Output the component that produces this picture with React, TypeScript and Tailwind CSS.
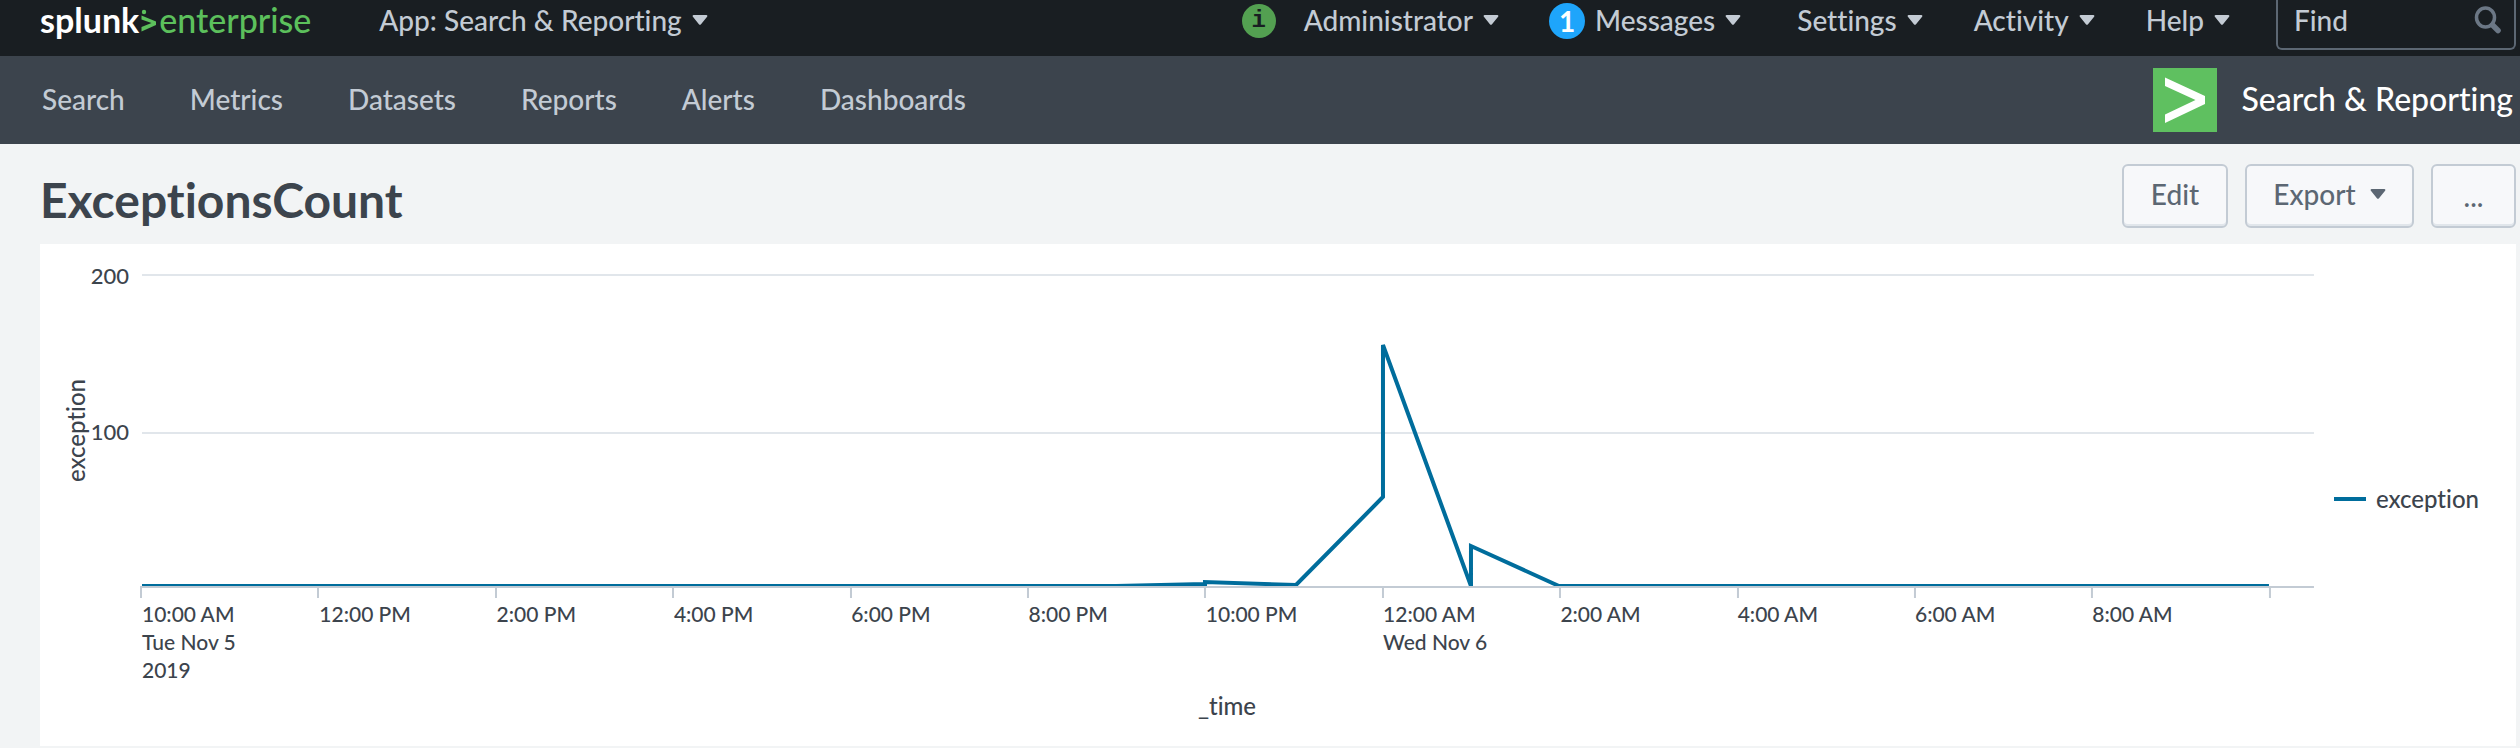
const navItems = ["Search", "Metrics", "Datasets", "Reports", "Alerts", "Dashboards"];

const timeLabels: string[][] = [
  ["10:00 AM", "Tue Nov 5", "2019"],
  ["12:00 PM"],
  ["2:00 PM"],
  ["4:00 PM"],
  ["6:00 PM"],
  ["8:00 PM"],
  ["10:00 PM"],
  ["12:00 AM", "Wed Nov 6"],
  ["2:00 AM"],
  ["4:00 AM"],
  ["6:00 AM"],
  ["8:00 AM"],
];

// Plot space: 2174 wide, two hours every 177.4 units, baseline at y = 312.
const tickStep = 177.4;
const series =
  "2,312 976,312 1065,310 1065,308 1156,311 1243,223 1243,71 1331,312 1331,272 1419,312 2129,312";

function Caret({ className = "" }: { className?: string }) {
  return (
    <svg width="16" height="10" viewBox="0 0 16 10" fill="currentColor" className={className} aria-hidden="true">
      <path d="M1.6 0h12.8c.9 0 1.3 1 .7 1.7L9 9.200c-.6.7-1.500.7-2.100 0L.9 1.700C.3 1 .7 0 1.600 0z" />
    </svg>
  );
}

function MenuButton({ label }: { label: string }) {
  return (
    <button type="button" className="flex h-10 items-center gap-[10px] whitespace-nowrap">
      {label}
      <Caret />
    </button>
  );
}

function TopBar() {
  return (
    <header className="flex h-14 items-start bg-[#191e22] pl-10 pr-1 text-[28px] leading-10 text-[#c3cbd4]">
      <a href="#home" className="flex h-10 items-center text-[34px]" aria-label="splunk enterprise">
        <span className="font-bold text-white">splunk</span>
        <svg width="20" height="26" viewBox="0 0 20 26" aria-hidden="true">
          <path d="M2.500 8.500L17 14.500v3.500L2.500 24.500v-4.500L12.500 16 2.500 12.500z" fill="#5cc05c" />
          <circle cx="5" cy="5" r="2.200" fill="#5cc05c" />
        </svg>
        <span className="text-[#5cc05c]">enterprise</span>
      </a>
      <div className="ml-17">
        <MenuButton label="App: Search & Reporting" />
      </div>
      <div className="ml-auto flex items-start">
        <span className="mr-7 mt-1 flex size-[34px] items-center justify-center rounded-full bg-[#53a051] font-['Liberation_Mono',monospace] text-2xl font-bold text-[#191e22]">
          i
        </span>
        <MenuButton label="Administrator" />
        <span className="ml-[50px] mr-[10px] mt-[3px] flex size-9 items-center justify-center rounded-full bg-[#1ea5fb] font-bold text-white">
          1
        </span>
        <MenuButton label="Messages" />
        <nav className="ml-14 flex gap-[51px]">
          <MenuButton label="Settings" />
          <MenuButton label="Activity" />
          <MenuButton label="Help" />
        </nav>
        <label className="ml-[46px] flex h-[50px] w-60 items-start rounded-b-md border-2 border-t-0 border-[#5c6773] pl-4 pr-3">
          <input
            type="text"
            aria-label="Find"
            placeholder="Find"
            className="h-10 w-full min-w-0 bg-transparent outline-none placeholder:text-[#c3cbd4]"
          />
          <svg width="28" height="28" viewBox="0 0 28 28" fill="none" stroke="#6b7785" className="mt-[6px] shrink-0" aria-hidden="true">
            <ellipse cx="11.500" cy="11.500" rx="9" ry="9.500" strokeWidth="3.500" />
            <path d="M18.500 19l5.500 5.500" strokeWidth="5.500" strokeLinecap="round" />
          </svg>
        </label>
      </div>
    </header>
  );
}

function AppBar() {
  return (
    <div className="flex h-22 items-center bg-[#3c444d] pl-[42px] pr-[7px]">
      <nav className="flex gap-[65px] pb-[2px] text-[28px] leading-10 text-[#c3cbd4]">
        {navItems.map((item) => (
          <a key={item} href={`#${item.toLowerCase()}`}>
            {item}
          </a>
        ))}
      </nav>
      <a href="#app" className="ml-auto flex items-center gap-6 whitespace-nowrap text-[32px] leading-10 text-white">
        <svg width="64" height="64" viewBox="0 0 64 64" aria-hidden="true">
          <rect width="64" height="64" fill="#5fc060" />
          <path d="M12 9.500L52 28v8L12 55v-8.500L42.500 32 12 18z" fill="#fff" />
        </svg>
        <span className="pb-[2px]">Search &amp; Reporting</span>
      </a>
    </div>
  );
}

function TitleRow() {
  const button =
    "flex h-16 items-center justify-center rounded-md border-2 border-[#c3cbd4] bg-[#f7f8fa] shadow-[inset_0_-2px_0_#e1e6eb]";
  return (
    <div className="flex h-25 items-start justify-between pl-10 pr-1 pt-5">
      <h1 className="text-5xl font-bold leading-[72px] text-[#3c444d]">ExceptionsCount</h1>
      <div className="flex gap-[17px] text-[28px] leading-10 text-[#5c6773]">
        <button type="button" className={`${button} w-[106px] pb-1`}>
          Edit
        </button>
        <button type="button" className={`${button} w-[169px] gap-[14px] pb-1`}>
          Export
          <Caret />
        </button>
        <button type="button" className={`${button} w-[85px]`} aria-label="More actions">
          ...
        </button>
      </div>
    </div>
  );
}

function Chart() {
  return (
    <section className="mb-[2px] ml-10 mr-1 flex h-[502px] items-start bg-white pl-[22px] text-[22px] leading-7 text-[#3c444d]">
      <div className="flex h-[374px] w-7 items-center justify-center">
        <span className="rotate-180 text-2xl leading-7 [writing-mode:vertical-rl]">exception</span>
      </div>
      <div className="flex w-[39px] flex-col items-end gap-32 pt-[18px]">
        <span>200</span>
        <span>100</span>
      </div>
      <div className="ml-[11px] min-w-0 flex-1 pt-[30px]">
        <svg
          className="block h-[324px] w-full"
          viewBox="0 0 2174 324"
          preserveAspectRatio="none"
          role="img"
          aria-label="exception over _time"
        >
          <clipPath id="plot">
            <rect x="2" y="0" width="2172" height="312" />
          </clipPath>
          <path d="M2 1H2174M2 159H2174" stroke="#e1e6eb" strokeWidth="2" />
          <polyline points={series} fill="none" stroke="#006d9c" strokeWidth="4" clipPath="url(#plot)" />
          <path d="M0 313H2174" stroke="#c3cbd4" strokeWidth="2" />
          {Array.from({ length: 13 }, (_, i) => (
            <rect key={i} x={Math.round(i * tickStep)} y="312" width="2" height="12" fill="#c3cbd4" />
          ))}
        </svg>
        <div className="flex pl-[2px] pt-[2px] text-[21px] leading-7">
          {timeLabels.map((lines) => (
            <div key={lines[0]} className="min-w-0 grow-4 basis-0 whitespace-nowrap">
              {lines.map((line) => (
                <div key={line}>{line}</div>
              ))}
            </div>
          ))}
          <div className="grow basis-0" />
        </div>
        <div className="pt-2 text-center text-2xl leading-7">_time</div>
      </div>
      <div className="ml-5 mr-[37px] mt-[241px] flex items-center gap-[10px] text-2xl leading-7">
        <span className="h-1 w-8 bg-[#006d9c]" />
        exception
      </div>
    </section>
  );
}

export default function App() {
  return (
    <div className="min-h-screen bg-[#f2f4f5] font-['Lato',sans-serif] font-medium [font-variant-ligatures:none]">
      <TopBar />
      <AppBar />
      <main>
        <TitleRow />
        <Chart />
      </main>
    </div>
  );
}
